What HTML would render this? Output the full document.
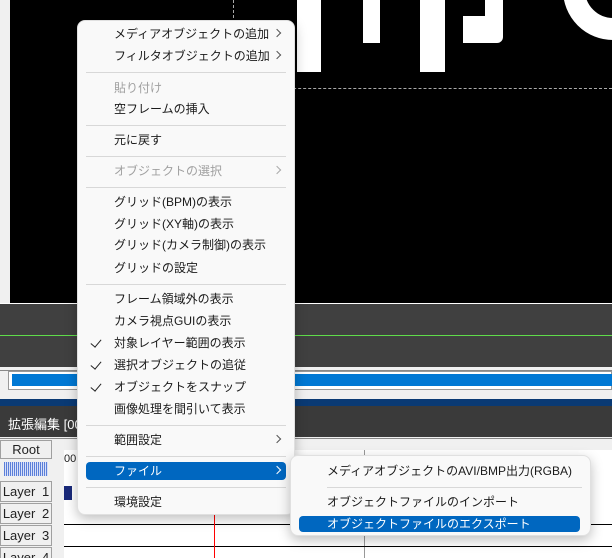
<!DOCTYPE html>
<html><head><meta charset="utf-8"><style>
*{margin:0;padding:0;box-sizing:border-box}
html,body{width:612px;height:558px;overflow:hidden}
body{position:relative;background:#f0f0f0;font-family:"Liberation Sans","Noto Sans CJK JP",sans-serif;font-size:12px}
.a{position:absolute}
.menu{position:absolute;background:#f9f9f9;border:1px solid #e0e0e0;border-radius:8px;box-shadow:0 4px 12px rgba(0,0,0,.25)}
.it{position:absolute;left:0;right:0;height:22px;line-height:22px;color:#1a1a1a;white-space:nowrap}
.dis{color:#a0a0a0}
.sep{position:absolute;height:1px;background:#d8d8d8}
.arr{position:absolute;right:14px;top:7px;width:6px;height:6px;border-right:1.2px solid #555;border-top:1.2px solid #555;transform:rotate(45deg)}
.chk{position:absolute;left:15px;top:5px;width:6px;height:10px;border-right:1.6px solid #222;border-bottom:1.6px solid #222;transform:rotate(40deg)}
.lay{position:absolute;left:0;width:52px;height:21px;border:1px solid #a0a0a0;background:#f0f0f0;text-align:center;line-height:19px;font-size:13px;color:#222;word-spacing:3px}
</style></head><body>
<div class="a" style="left:10px;top:0;width:602px;height:303px;background:#000"></div>
<div class="a" style="left:233px;top:0;width:0;height:88px;border-left:1px dashed #aaa"></div>
<div class="a" style="left:233px;top:88px;width:379px;height:0;border-top:1px dashed #aaa"></div>
<div class="a" style="left:297px;top:0;width:24px;height:72px;background:#fff"></div>
<div class="a" style="left:363px;top:0;width:17px;height:43px;background:#fff"></div>
<div class="a" style="left:420px;top:0;width:25px;height:72px;background:#fff"></div>
<div class="a" style="left:463px;top:0;width:40px;height:43px;background:#fff;border-radius:0 0 6px 0"></div>
<div class="a" style="left:463px;top:0;width:22px;height:16px;background:#000"></div>
<div class="a" style="left:563px;top:-60px;width:100px;height:100px;border:22px solid #fff;border-radius:50%"></div>
<div class="a" style="left:0;top:303px;width:612px;height:1px;background:#fff"></div>
<div class="a" style="left:0;top:304px;width:612px;height:63px;background:#404040"></div>
<div class="a" style="left:0;top:335px;width:612px;height:1px;background:#5fdc4a"></div>
<div class="a" style="left:0;top:370px;width:612px;height:1px;background:#888"></div>
<div class="a" style="left:8px;top:371px;width:604px;height:19px;background:#fff;border:1px solid #999"></div>
<div class="a" style="left:12px;top:374px;width:600px;height:12px;background:#0078d4"></div>
<div class="a" style="left:0;top:399px;width:612px;height:7px;background:#0a3a74"></div>
<div class="a" style="left:0;top:406px;width:612px;height:31px;background:#3a3a3a"></div>
<div class="a" style="left:8px;top:414px;color:#fff;font-size:13px">拡張編集 [00</div>
<div class="a" style="left:0;top:438px;width:612px;height:1px;background:#888"></div>
<div class="a" style="left:64px;top:450px;width:548px;height:108px;background:#fff"></div>
<div class="a" style="left:64px;top:453px;color:#222;font-size:11px">00</div>
<div class="a" style="left:364px;top:450px;width:1px;height:108px;background:#999"></div>
<div class="a" style="left:64px;top:524px;width:548px;height:1px;background:#000"></div>
<div class="a" style="left:64px;top:546px;width:548px;height:1px;background:#000"></div>
<div class="a" style="left:214px;top:505px;width:1px;height:53px;background:#f00"></div>
<div class="a" style="left:64px;top:486px;width:8px;height:14px;background:#1a2a7a"></div>
<div class="lay" style="top:440px;height:19px;line-height:17px">Root</div>
<div class="a" style="left:4px;top:462px;width:44px;height:14px;background:repeating-linear-gradient(90deg,#5b7fd8 0 1px,#d8e0f8 1px 2px)"></div>
<div class="lay" style="top:481px">Layer 1</div>
<div class="lay" style="top:503px">Layer 2</div>
<div class="lay" style="top:525px">Layer 3</div>
<div class="lay" style="top:547px">Layer 4</div>
<div class="menu" style="left:77px;top:20px;width:218px;height:495px">
<div class="it" style="top:2px;padding-left:36px">メディアオブジェクトの追加<span class="arr"></span></div>
<div class="it" style="top:24px;padding-left:36px">フィルタオブジェクトの追加<span class="arr"></span></div>
<div class="sep" style="top:51px;left:8px;right:8px"></div>
<div class="it dis" style="top:56px;padding-left:36px">貼り付け</div>
<div class="it" style="top:77px;padding-left:36px">空フレームの挿入</div>
<div class="sep" style="top:104px;left:8px;right:8px"></div>
<div class="it" style="top:108px;padding-left:36px">元に戻す</div>
<div class="sep" style="top:135px;left:8px;right:8px"></div>
<div class="it dis" style="top:139px;padding-left:36px">オブジェクトの選択<span class="arr" style="border-color:#aaa"></span></div>
<div class="sep" style="top:166px;left:8px;right:8px"></div>
<div class="it" style="top:170px;padding-left:36px">グリッド(BPM)の表示</div>
<div class="it" style="top:192px;padding-left:36px">グリッド(XY軸)の表示</div>
<div class="it" style="top:213px;padding-left:36px">グリッド(カメラ制御)の表示</div>
<div class="it" style="top:236px;padding-left:36px">グリッドの設定</div>
<div class="sep" style="top:263px;left:8px;right:8px"></div>
<div class="it" style="top:267px;padding-left:36px">フレーム領域外の表示</div>
<div class="it" style="top:289px;padding-left:36px">カメラ視点GUIの表示</div>
<div class="it" style="top:311px;padding-left:36px"><span class="chk"></span>対象レイヤー範囲の表示</div>
<div class="it" style="top:333px;padding-left:36px"><span class="chk"></span>選択オブジェクトの追従</div>
<div class="it" style="top:355px;padding-left:36px"><span class="chk"></span>オブジェクトをスナップ</div>
<div class="it" style="top:377px;padding-left:36px">画像処理を間引いて表示</div>
<div class="sep" style="top:404px;left:8px;right:8px"></div>
<div class="it" style="top:408px;padding-left:36px">範囲設定<span class="arr"></span></div>
<div class="sep" style="top:435px;left:8px;right:8px"></div>
<div class="a" style="left:8px;top:441px;width:200px;height:18px;background:#0067c0;border-radius:4px"></div>
<div class="it" style="top:439px;padding-left:36px;color:#fff">ファイル<span class="arr" style="border-color:#fff"></span></div>
<div class="sep" style="top:466px;left:8px;right:8px"></div>
<div class="it" style="top:470px;padding-left:36px">環境設定</div>
</div>
<div class="menu" style="left:290px;top:455px;width:301px;height:81px">
<div class="it" style="top:4px;padding-left:36px">メディアオブジェクトのAVI/BMP出力(RGBA)</div>
<div class="sep" style="top:31px;left:36px;right:8px"></div>
<div class="it" style="top:35px;padding-left:36px">オブジェクトファイルのインポート</div>
<div class="a" style="left:8px;top:60px;width:281px;height:16px;background:#0067c0;border-radius:4px"></div>
<div class="it" style="top:57px;padding-left:36px;color:#fff">オブジェクトファイルのエクスポート</div>
</div>
</body></html>
